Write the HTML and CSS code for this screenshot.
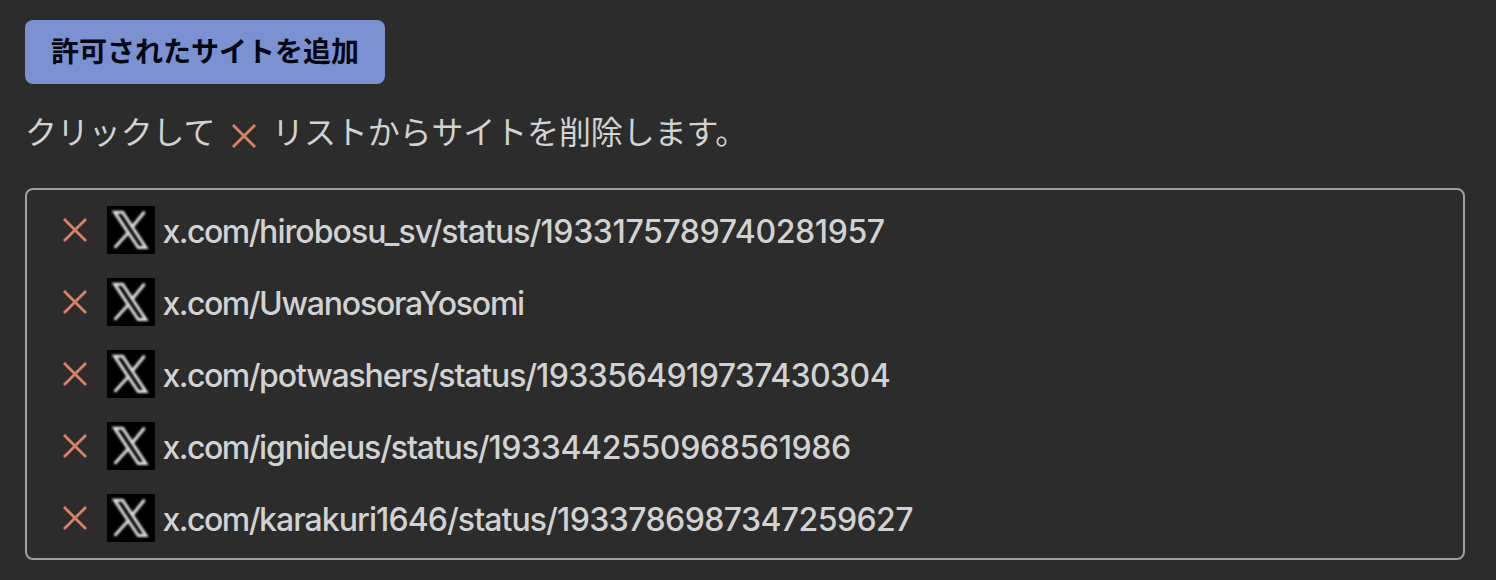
FILE: index.html
```html
<!DOCTYPE html>
<html lang="ja">
<head>
<meta charset="utf-8">
<title>許可されたサイト</title>
<link rel="stylesheet" href="styles.css">
</head>
<body>
<svg class="defs" aria-hidden="true">
  <symbol id="cross" viewBox="0 0 24 24"><path d="M1 1 23 23M23 1 1 23" fill="none" stroke="currentColor" stroke-width="2.8"/></symbol>
  <symbol id="x-logo" viewBox="0 0 48 48"><path d="M7.6 6.2H15.6L38.8 41.5H31.3ZM37.6 5.8 25 21.3M21.6 26.2 7.6 41.8" fill="none" stroke="currentColor" stroke-width="3.1"/></symbol>
</svg>
<main class="page">
  <button class="add" type="button">許可されたサイトを追加</button>
  <p class="hint"><span>クリックして</span><svg class="cross"><use href="#cross"/></svg><span>リストからサイトを削除します。</span></p>
  <ul class="sites">
    <li class="site"><svg class="cross"><use href="#cross"/></svg><svg class="favicon"><use href="#x-logo"/></svg><span class="url"><span class="host">x.com/</span><span class="path">hirobosu_sv/status/</span><span class="id wide">1933175789740281957</span></span></li>
    <li class="site"><svg class="cross"><use href="#cross"/></svg><svg class="favicon"><use href="#x-logo"/></svg><span class="url"><span class="host">x.com/</span><span class="path profile">UwanosoraYosomi</span></span></li>
    <li class="site"><svg class="cross"><use href="#cross"/></svg><svg class="favicon"><use href="#x-logo"/></svg><span class="url"><span class="host">x.com/</span><span class="path tight">potwashers/status/</span><span class="id">1933564919737430304</span></span></li>
    <li class="site"><svg class="cross"><use href="#cross"/></svg><svg class="favicon"><use href="#x-logo"/></svg><span class="url"><span class="host">x.com/</span><span class="path tight">ignideus/status/</span><span class="id wide">1933442550968561986</span></span></li>
    <li class="site"><svg class="cross"><use href="#cross"/></svg><svg class="favicon"><use href="#x-logo"/></svg><span class="url"><span class="host">x.com/</span><span class="path">karakuri1646/status/</span><span class="id">1933786987347259627</span></span></li>
  </ul>
</main>
</body>
</html>
```
FILE: styles.css
```css
* { box-sizing: border-box; }
body {
  margin: 0;
  background: #2c2c2c;
  color: #d2d2d2;
  font-family: Inter, "Noto Sans CJK JP", sans-serif;
  font-size: 32px;
}
.defs { display: none; }
.page { padding: 20px 31px 20px 25px; }
.add {
  display: block;
  width: 360px;
  height: 64px;
  margin: 0;
  padding: 0 0 4px;
  border: 0;
  border-radius: 8px;
  background: #7b91d1;
  color: #030711;
  font: 700 28px/40px "Noto Sans CJK JP", sans-serif;
  white-space: nowrap;
}
.hint {
  display: flex;
  align-items: center;
  height: 48px;
  margin: 22px 0 34px;
  font-family: "Noto Sans CJK JP", sans-serif;
  line-height: 48px;
  letter-spacing: -0.12px;
  white-space: nowrap;
}
.cross {
  flex: none;
  width: 24px;
  height: 24px;
  color: #dc8068;
}
.hint .cross { margin: 12px 16px 0 16.7px; }
.sites {
  display: flex;
  flex-direction: column;
  gap: 24px;
  height: 372px;
  margin: 0;
  padding: 16px 36px;
  border: 2px solid #a0a0a0;
  border-radius: 8px;
  list-style: none;
}
.site { display: flex; align-items: center; height: 48px; }
.favicon {
  flex: none;
  width: 48px;
  height: 48px;
  margin: 0 7.5px 0 20px;
  background: #000;
  color: #dedede;
}
.favicon use { filter: blur(0.8px); }
.url {
  padding-top: 3px;
  line-height: 48px;
  font-weight: 450;
  white-space: nowrap;
}
.host { letter-spacing: -1.5px; }
.path { letter-spacing: -0.93px; }
.path.tight { letter-spacing: -1.15px; }
.path.profile { letter-spacing: -1.22px; }
.id { letter-spacing: -0.58px; }
.id.wide { letter-spacing: -0.38px; }
```
